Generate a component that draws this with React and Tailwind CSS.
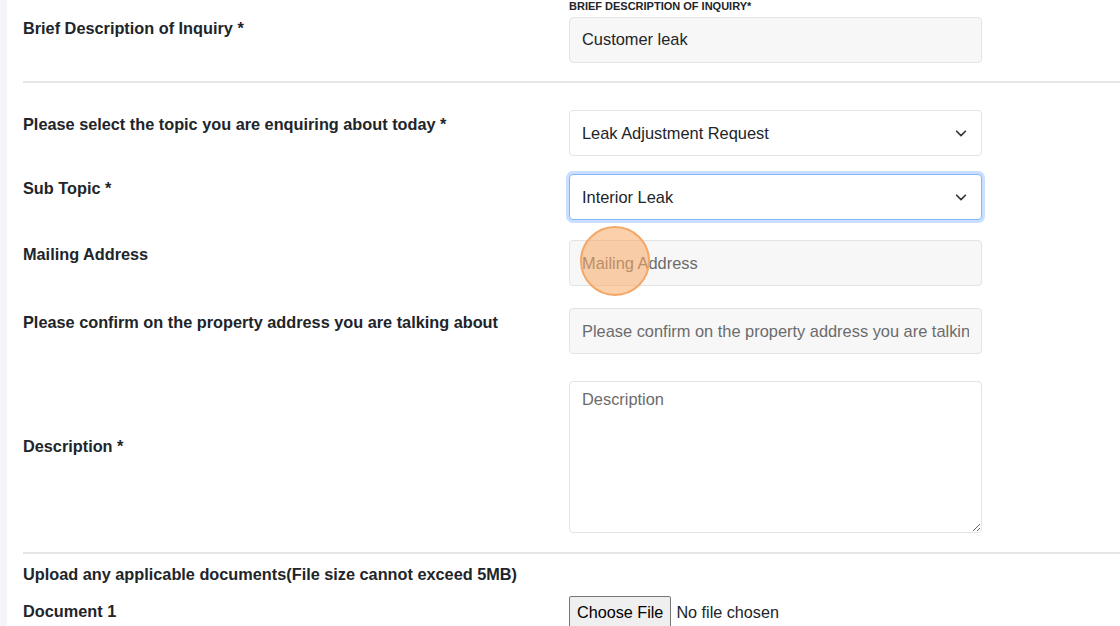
import { useState } from "react";

const font = { fontFamily: '"Liberation Sans", Arial, sans-serif' };

const Chevron = () => (
  <svg
    className="pointer-events-none absolute right-[14px] top-1/2 -translate-y-1/2"
    width="14"
    height="14"
    viewBox="0 0 16 16"
    fill="none"
    stroke="#343a40"
    strokeWidth="2"
    strokeLinecap="round"
    strokeLinejoin="round"
  >
    <path d="m3 6 5 5 5-5" />
  </svg>
);

const Row = ({ label, labelClass = "pt-[2px]", className = "", children }) => (
  <div className={`flex items-start ${className}`}>
    <div className={`w-[546px] shrink-0 font-bold text-[16.3px] text-[#212529] ${labelClass}`}>
      {label}
    </div>
    <div className="w-[413px]">{children}</div>
  </div>
);

const inputBase =
  "block w-full h-[46px] rounded-[4px] border px-[12px] text-[16.4px] outline-none";

const Form = () => {
  const [topic, setTopic] = useState("leak");
  const [sub, setSub] = useState("interior");

  return (
    <div className="flex-1 pl-4 text-[#212529]" style={font}>
      <Row label="Brief Description of Inquiry *" labelClass="pt-[16px]" className="h-[81px]">
        <div className="text-[11px] font-bold uppercase leading-none pt-[1px] text-[#212529]">
          Brief Description of Inquiry*
        </div>
        <input
          readOnly
          value="Customer leak"
          className={`${inputBase} mt-[5px] pb-[2px] bg-[#f7f7f7] border-[#e3e3e3] text-[#212529]`}
        />
      </Row>

      <div className="h-[2px] bg-[#e6e6e6]" />

      <Row label="Please select the topic you are enquiring about today *" className="mt-[27px]">
        <div className="relative">
          <select
            value={topic}
            onChange={(e) => setTopic(e.target.value)}
            className={`${inputBase} appearance-none bg-white border-[#e3e3e3] text-[#212529]`}
          >
            <option value="leak">Leak Adjustment Request</option>
          </select>
          <Chevron />
        </div>
      </Row>

      <Row label="Sub Topic *" className="mt-[18px]">
        <div className="relative">
          <select
            value={sub}
            onChange={(e) => setSub(e.target.value)}
            className={`${inputBase} appearance-none bg-white border-[#86b7fe] shadow-[0_0_0_3px_rgba(13,110,253,0.22)] text-[#212529]`}
          >
            <option value="interior">Interior Leak</option>
          </select>
          <Chevron />
        </div>
      </Row>

      <Row label="Mailing Address" className="mt-[20px]">
        <div className="relative">
          <input
            placeholder="Mailing Address"
            className={`${inputBase} bg-[#f7f7f7] border-[#e3e3e3] placeholder:text-[#6b6b6b]`}
          />
          {/* click marker */}
          <div className="pointer-events-none absolute left-[11px] top-[-14px] h-[70px] w-[70px] rounded-full border-2 border-[#f2a868] bg-[rgba(250,170,100,0.55)]" />
        </div>
      </Row>

      <Row label="Please confirm on the property address you are talking about" className="mt-[22px]">
        <input
          placeholder="Please confirm on the property address you are talking about"
          className={`${inputBase} bg-[#f7f7f7] border-[#e3e3e3] placeholder:text-[#6b6b6b]`}
        />
      </Row>

      <Row label="Description *" labelClass="pt-[53px]" className="mt-[27px]">
        <textarea
          placeholder="Description"
          className="block w-full h-[152px] rounded-[4px] border border-[#e3e3e3] bg-white px-[12px] py-[5px] text-[16.4px] outline-none placeholder:text-[#6b6b6b]"
        />
      </Row>

      <div className="mt-[19px] h-[2px] bg-[#e6e6e6]" />

      <div className="pt-[8px] font-bold text-[16.3px]">
        Upload any applicable documents(File size cannot exceed 5MB)
      </div>

      <Row label="Document 1" labelClass="pt-[3px]" className="mt-[10px]">
        <input
          type="file"
          className="text-[16.2px] text-[#212529] file:mr-[5px] file:rounded-[2px] file:border file:border-solid file:border-[#767676] file:bg-[#efefef] file:px-[7px] file:py-[3px] file:text-[16.2px] file:text-black"
        />
      </Row>
    </div>
  );
};

export default function App() {
  return (
    <div className="flex h-[626px] w-[1120px] overflow-hidden bg-white">
      <div className="w-[7px] shrink-0 bg-[#f3f5fb]" />
      <Form />
    </div>
  );
}
